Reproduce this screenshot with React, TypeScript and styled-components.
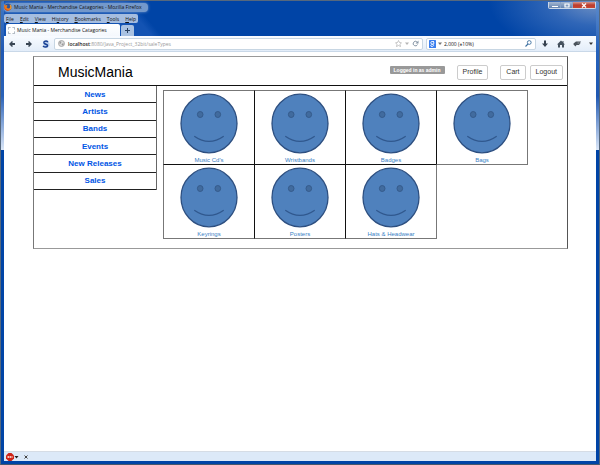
import React from "react";
import styled, { createGlobalStyle, css } from "styled-components";

const GlobalStyle = createGlobalStyle`
  *, *::before, *::after { box-sizing: border-box; }
  html, body, #root { height: 100%; }
  body { margin: 0; background: #4d6076; }
  button, input { font: inherit; color: inherit; margin: 0; }
`;

const chromeFont = `"Open Sans", "Noto Sans", sans-serif`;
const pageFont = `"Liberation Sans", Arial, sans-serif`;

const BrowserWindow = styled.div`
  display: flex;
  flex-direction: column;
  min-height: 100%;
  padding: 1px 3px 3px;
  border: 1px solid #56687d;
  border-bottom-color: #46586d;
  border-radius: 3px 3px 0 0;
  font: 5px/8px ${chromeFont};
  color: #111;
  background:
    linear-gradient(#3f78c4 0, #2159b4 50px, #2a62b8 95px, #dbe7f8 149px, transparent 149px) left / 3px 100% no-repeat,
    linear-gradient(#5f8ccb 0, #2563bd 50px, #1f58b2 95px, #dbe7f8 149px, transparent 149px) right / 3px 100% no-repeat,
    radial-gradient(ellipse 110px 55px at 100% 0, #7796c6 0, rgba(80, 125, 195, 0.6) 45%, transparent 100%),
    linear-gradient(50deg, #1353b3 0, #1353b3 46%, transparent 49%) 0 0 / 300px 36px no-repeat,
    #0044a6;
`;

const TitleBar = styled.header`
  display: flex;
  align-items: center;
  height: 10px;
`;

const Title = styled.h1`
  display: flex;
  align-items: center;
  gap: 2px;
  margin: 0;
  padding-right: 6px;
  height: 9px;
  border-radius: 4px;
  font: inherit;
  background: #7398cb;
  box-shadow: 0 0 3px #7398cb;
`;

const WindowButtons = styled.div`
  display: flex;
  align-self: flex-start;
  margin-left: auto;
  border: 1px solid #cbd7e8;
  border-top: 0;
  border-radius: 0 0 2px 2px;
`;

const WindowButton = styled.button<{ $close?: boolean }>`
  display: flex;
  align-items: center;
  justify-content: center;
  width: ${(p) => (p.$close ? 22 : 12)}px;
  height: 6px;
  padding: 0;
  border: 0;
  border-right: ${(p) => (p.$close ? 0 : 1)}px solid #8ba3c6;
  background: ${(p) =>
    p.$close
      ? "linear-gradient(#d59a92, #bd3c2c 50%, #c64632)"
      : "linear-gradient(#a4b7d1, #6584b0)"};
  svg { display: block; flex: none; }
`;

const MenuBar = styled.nav`
  display: flex;
  align-self: flex-start;
  align-items: center;
  gap: 6px;
  height: 9px;
  margin-top: 2px;
  padding: 0 2px;
  border-radius: 2px;
  background: #a5bddf;
`;

const MenuItem = styled.button`
  padding: 0;
  border: 0;
  background: none;
`;

const TabStrip = styled.div`
  display: flex;
  align-items: flex-end;
  gap: 1px;
  height: 13px;
  padding: 1px 0 0 2px;
`;

const Tab = styled.button`
  display: flex;
  align-items: center;
  gap: 2px;
  width: 114px;
  height: 12px;
  padding: 0 2px;
  border: 0;
  border-radius: 2px 2px 0 0;
  background: linear-gradient(#fff, #f4f8fd);
  white-space: nowrap;
`;

const Favicon = styled.span`
  width: 7px;
  height: 7px;
  border: 1px dashed #b5bdc6;
  background: #fff;
`;

const NewTab = styled.button`
  display: grid;
  place-items: center;
  width: 13px;
  height: 11px;
  padding: 0;
  border: 0;
  border-radius: 2px 2px 0 0;
  background: #a9c2e2;
`;

const Toolbar = styled.div`
  display: flex;
  align-items: center;
  gap: 3px;
  height: 16px;
  padding: 0 3px;
  border-bottom: 1px solid #c9d8e8;
  background: linear-gradient(#f8fbff, #e3edf9);
`;

const ToolGroup = styled.div<{ $end?: boolean }>`
  display: flex;
  align-items: center;
  justify-content: space-between;
  flex: none;
  width: ${(p) => (p.$end ? 52 : 44)}px;
  ${(p) => (p.$end ? css`margin-left: 2px;` : css`padding: 0 1px;`)}
`;

const IconButton = styled.button`
  display: grid;
  place-items: center;
  flex: none;
  padding: 0;
  border: 0;
  background: none;
  svg { display: block; }
`;

const Field = styled.div<{ $search?: boolean }>`
  display: flex;
  align-items: center;
  gap: 3px;
  height: 12px;
  padding: 0 3px;
  border: 1px solid #c7d6e3;
  border-radius: 2px;
  background: #fff;
  ${(p) =>
    p.$search
      ? css`flex: 0 0 110px; gap: 2px; padding-left: 2px;`
      : css`flex: 1;`}
`;

const AddressText = styled.div`
  flex: 1;
  color: #999;
  white-space: nowrap;
  strong { color: #222; font-weight: 600; }
`;

const SearchInput = styled.input`
  flex: 1;
  min-width: 0;
  height: 8px;
  padding: 0;
  border: 0;
  outline: 0;
  background: none;
`;

const Viewport = styled.div`
  flex: 1;
  padding: 4px 28px 4px 29px;
  background: #fff;
  font-family: ${pageFont};
`;

const Site = styled.div`
  border: 1px solid #999;
  border-left-color: #777;
  border-right-color: #555;
`;

const SiteHeader = styled.header`
  display: flex;
  align-items: center;
  height: 29px;
  padding: 2px 4px 0 24px;
  border-bottom: 1px solid #111;
`;

const Brand = styled.h2`
  margin: 0;
  font-size: 14px;
  line-height: 16px;
  font-weight: 400;
  color: #000;
`;

const Badge = styled.span`
  align-self: flex-start;
  margin: 7px 12px 0 auto;
  padding: 0 4px;
  border-radius: 1px;
  background: #999;
  color: #fff;
  font-size: 5px;
  line-height: 8px;
  font-weight: 700;
`;

const Actions = styled.div`
  display: flex;
  gap: 4px;
`;

const ActionButton = styled.button<{ $apart?: boolean }>`
  height: 15px;
  margin-right: ${(p) => (p.$apart ? 8 : 0)}px;
  padding: 0 5px;
  border: 1px solid #ccc;
  border-radius: 2px;
  background: #fff;
  color: #333;
  font-size: 7px;
  line-height: 12px;
`;

const SiteBody = styled.div`
  display: flex;
  align-items: flex-start;
  gap: 6px;
  padding-bottom: 9px;
`;

const SideNav = styled.nav`
  display: grid;
  grid-template-rows: repeat(6, 1fr);
  flex: 0 0 123px;
  height: 104px;
  border-right: 1px solid #666;
`;

const SideLink = styled.a`
  display: grid;
  place-items: center;
  padding-top: 1px;
  border-bottom: 1px solid #222;
  color: #0055e5;
  font-size: 8px;
  line-height: 12px;
  font-weight: 700;
  text-decoration: none;
`;

const Gallery = styled.main`
  display: grid;
  flex: 1;
  grid-template-columns: repeat(4, 91px);
  grid-auto-rows: 74px;
  padding: 4px 0 1px;
`;

const Category = styled.a`
  display: flex;
  flex-direction: column;
  align-items: center;
  margin: 0 -1px -1px 0;
  padding-top: 2px;
  border: 1px solid #777;
  color: #3a80c4;
  font-size: 6px;
  line-height: 8px;
  text-decoration: none;
  &:not(:nth-child(4n + 1)) { border-left-color: #111; }
  &:nth-child(n + 5) { border-top-color: #111; }
  svg { display: block; flex: none; margin-bottom: 2px; }
`;

const StatusBar = styled.footer`
  display: flex;
  align-items: center;
  gap: 5px;
  height: 10px;
  padding-left: 2px;
  border-top: 1px solid #d5dce5;
  background: #dce9f8;
`;

const Smiley = () => (
  <svg width="58" height="61" viewBox="0 0 58 61" aria-hidden="true">
    <ellipse cx="29" cy="30.5" rx="28" ry="29.3" fill="#4f81bd" stroke="#2d4f80" strokeWidth="1.3" />
    <g fill="#416b9e" stroke="#355b8c" strokeWidth="1">
      <ellipse cx="20.2" cy="21.5" rx="2.8" ry="3" />
      <ellipse cx="37.8" cy="21.5" rx="2.8" ry="3" />
    </g>
    <path d="M14.3 43.2 Q29 53.5 43.7 43.2" fill="none" stroke="#30588e" strokeWidth="1.3" />
  </svg>
);

const FirefoxIcon = () => (
  <svg width="8" height="8" viewBox="0 0 16 16" aria-hidden="true">
    <circle cx="8" cy="8" r="7" fill="#28549c" />
    <path d="M1 2 3 5C5 3 6 4 7 6L5 8c1 3 5 4 7 1 1-2 0-5-2-6 5 0 6 6 4 9-3 5-11 4-13-1C0 8 0 5 1 2Z" fill="#ed7a16" />
    <path d="M1 7c0 5 4 8 9 7-5 3-10-1-9-7Z" fill="#d93c12" />
    <path d="M12 3c4 3 3 8 1 10 1-4 1-7-1-10Z" fill="#ffd24a" />
  </svg>
);

const Arrow = ({ turn = 0 }: { turn?: number }) => (
  <svg width="8" height="8" viewBox="0 0 16 16" aria-hidden="true">
    <path transform={`rotate(${turn} 8 8)`} d="M2 8 8 2l2 2-2 2h6v4H8l2 2-2 2Z" fill="#3a4654" />
  </svg>
);

const Globe = () => (
  <svg width="7" height="7" viewBox="0 0 14 14" aria-hidden="true">
    <circle cx="7" cy="7" r="6" fill="#ddd" stroke="#999" strokeWidth="1.5" />
    <path d="m3 3 4 0-1 4-3 1Zm5 4 4 0-2 4-3-1Z" fill="#999" />
  </svg>
);

const Caret = ({ color = "#333" }: { color?: string }) => (
  <svg width="4" height="3" viewBox="0 0 8 6" aria-hidden="true">
    <path d="M0 1h8L4 6Z" fill={color} />
  </svg>
);

const menus: { label: string; accessAt: number }[] = [
  { label: "File", accessAt: 0 },
  { label: "Edit", accessAt: 0 },
  { label: "View", accessAt: 0 },
  { label: "History", accessAt: 2 },
  { label: "Bookmarks", accessAt: 0 },
  { label: "Tools", accessAt: 0 },
  { label: "Help", accessAt: 0 },
];
const sections = ["News", "Artists", "Bands", "Events", "New Releases", "Sales"];
const categories = ["Music Cd's", "Wristbands", "Badges", "Bags", "Keyrings", "Posters", "Hats & Headwear"];

export default function App() {
  return (
    <>
      <GlobalStyle />
      <BrowserWindow>
        <TitleBar>
          <Title>
            <FirefoxIcon />
            Music Mania - Merchandise Catagories - Mozilla Firefox
          </Title>
          <WindowButtons>
            <WindowButton aria-label="Minimize">
              <svg width="6" height="5" viewBox="0 0 6 5"><path d="M0 3h6v1H0Z" fill="#fff" /></svg>
            </WindowButton>
            <WindowButton aria-label="Maximize">
              <svg width="6" height="5" viewBox="0 0 6 5"><path d="M1 1h4v3H1Z" fill="none" stroke="#fff" strokeWidth="1.2" /></svg>
            </WindowButton>
            <WindowButton $close aria-label="Close">
              <svg width="6" height="5" viewBox="0 0 6 5"><path d="m1 .5 4 4M5 .5l-4 4" stroke="#fff" strokeWidth="1.3" /></svg>
            </WindowButton>
          </WindowButtons>
        </TitleBar>
        <MenuBar aria-label="Menu bar">
          {menus.map(({ label, accessAt }) => (
            <MenuItem key={label}>
              {label.slice(0, accessAt)}
              <u>{label[accessAt]}</u>
              {label.slice(accessAt + 1)}
            </MenuItem>
          ))}
        </MenuBar>
        <TabStrip>
          <Tab>
            <Favicon />
            Music Mania - Merchandise Catagories
          </Tab>
          <NewTab aria-label="New tab">
            <svg width="5" height="5" viewBox="0 0 5 5"><path d="M2.5 0v5M0 2.5h5" stroke="#29405f" /></svg>
          </NewTab>
        </TabStrip>
        <Toolbar>
          <ToolGroup>
            <IconButton aria-label="Back"><Arrow /></IconButton>
            <IconButton aria-label="Forward"><Arrow turn={180} /></IconButton>
            <IconButton aria-label="Add-on">
              <svg width="8" height="8" viewBox="0 0 16 16">
                <circle cx="9" cy="9" r="6" fill="#b9cfee" />
                <path d="M12 4C9 1 3 2 4 6c1 3 7 2 7 5 0 4-6 4-9 1" fill="none" stroke="#173f93" strokeWidth="3" />
              </svg>
            </IconButton>
          </ToolGroup>
          <Field>
            <Globe />
            <AddressText><strong>localhost</strong>:8080/Java_Project_32bit/saleTypes</AddressText>
            <IconButton aria-label="Bookmark">
              <svg width="7" height="7" viewBox="0 0 14 14"><path d="m7 1 2 4 4 .5-3 3 1 4.5-4-2-4 2 1-4.5-3-3L5 5Z" fill="#fff" stroke="#aaa" strokeWidth="1.3" /></svg>
            </IconButton>
            <Caret color="#b5b5b5" />
            <IconButton aria-label="Reload">
              <svg width="7" height="7" viewBox="0 0 14 14"><path d="M11 9a4.5 4.5 0 1 1-1-5" fill="none" stroke="#8595a5" strokeWidth="2" /><path d="M13 1v6H7Z" fill="#8595a5" /></svg>
            </IconButton>
          </Field>
          <Field $search>
            <svg width="7" height="8" viewBox="0 0 14 16" aria-hidden="true">
              <rect width="14" height="16" rx="1" fill="#3b7fef" />
              <path d="M10 3H6a2.5 2.5 0 0 0 0 5c4 0 4 5 0 5s-3-4 1-4 3-6 1-6" fill="none" stroke="#fff" strokeWidth="1.7" />
            </svg>
            <Caret color="#777" />
            <SearchInput aria-label="Search" defaultValue="2,000 (±10%)" />
            <IconButton aria-label="Search">
              <svg width="7" height="7" viewBox="0 0 14 14"><circle cx="8.5" cy="5" r="3.8" fill="none" stroke="#3c6f9f" strokeWidth="1.8" /><path d="m6 8-5 5" stroke="#3c6f9f" strokeWidth="2.2" /></svg>
            </IconButton>
          </Field>
          <ToolGroup $end>
            <IconButton aria-label="Downloads">
              <svg width="8" height="8" viewBox="0 0 16 16"><path d="M6 1h4v6h4l-6 7-6-7h4Z" fill="#35414e" /></svg>
            </IconButton>
            <IconButton aria-label="Home">
              <svg width="8" height="8" viewBox="0 0 16 16"><path d="M8 1 0 9h2v6h4v-5h4v5h4V9h2l-3-3V2h-2v2Z" fill="#45515e" /></svg>
            </IconButton>
            <IconButton aria-label="Plugin">
              <svg width="8" height="8" viewBox="0 0 16 16"><path d="m1 7 5-4h10l-2 3h1l-3 4H7l-2 3-4-4Z" fill="#4a535c" /><path d="M9 6h4" stroke="#dfe6ed" /></svg>
            </IconButton>
            <IconButton aria-label="More tools"><Caret /></IconButton>
          </ToolGroup>
        </Toolbar>
        <Viewport>
          <Site>
            <SiteHeader>
              <Brand>MusicMania</Brand>
              <Badge>Logged in as admin</Badge>
              <Actions>
                <ActionButton $apart>Profile</ActionButton>
                <ActionButton>Cart</ActionButton>
                <ActionButton>Logout</ActionButton>
              </Actions>
            </SiteHeader>
            <SiteBody>
              <SideNav aria-label="Sections">
                {sections.map((s) => <SideLink key={s} href="#">{s}</SideLink>)}
              </SideNav>
              <Gallery>
                {categories.map((c) => (
                  <Category key={c} href="#"><Smiley />{c}</Category>
                ))}
              </Gallery>
            </SiteBody>
          </Site>
        </Viewport>
        <StatusBar>
          <IconButton aria-label="Adblock">
            <svg width="13" height="8" viewBox="0 0 26 16">
              <path d="M5 0h6l5 5v6l-5 5H5l-5-5V5Z" fill="#cf2418" />
              <path d="M3 8h10" stroke="#f3c4bd" strokeWidth="4" strokeDasharray="3 1" />
              <path d="M17 6h8l-4 5Z" fill="#222" />
            </svg>
          </IconButton>
          <IconButton aria-label="Close bar">
            <svg width="4" height="4" viewBox="0 0 8 8"><path d="m1 1 6 6M7 1 1 7" stroke="#444" strokeWidth="2" /></svg>
          </IconButton>
        </StatusBar>
      </BrowserWindow>
    </>
  );
}
